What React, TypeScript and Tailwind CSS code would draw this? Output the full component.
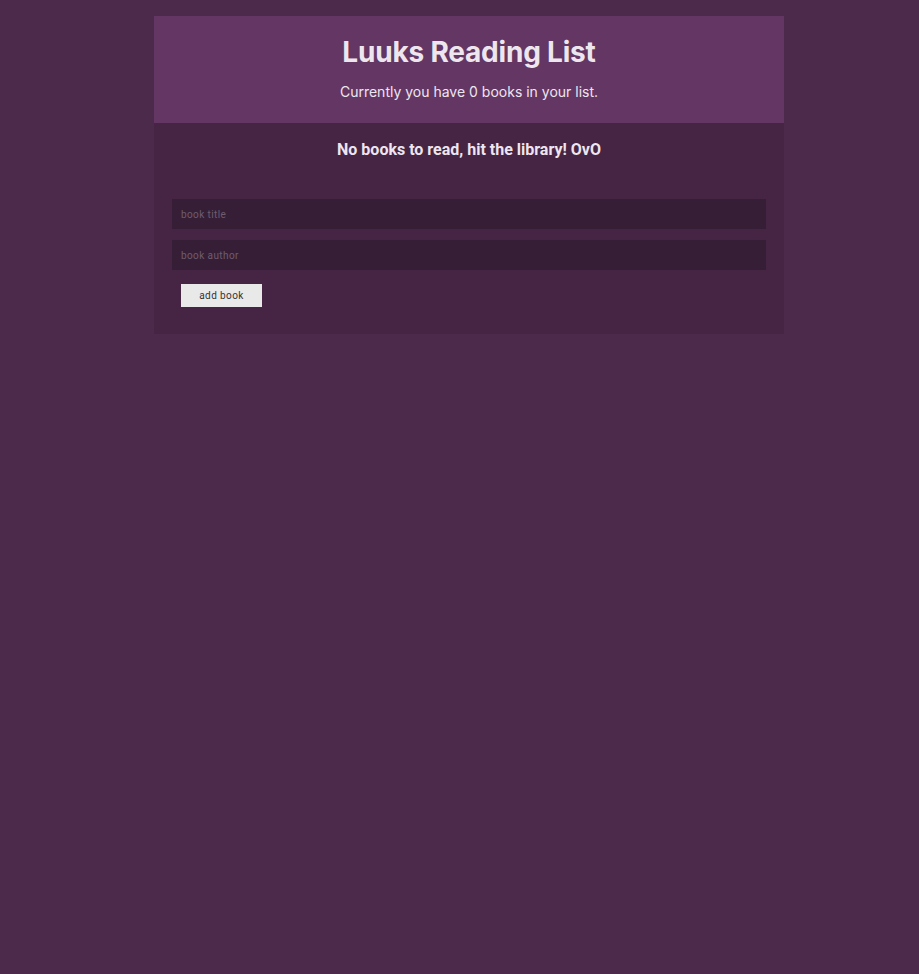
import React from "react";

export default function App() {
  return (
    <div className="min-h-[974px] w-full bg-[#4b2a4b] pt-4 font-[family-name:Inter,sans-serif]">
      <div className="ml-[154px] w-[630px]">
        <header className="flex h-[107px] flex-col items-center bg-[#633663] pt-[19px] text-[#eee6ee]">
          <h1 className="text-[28px] font-bold leading-[34px] tracking-[-0.2px]">Luuks Reading List</h1>
          <p className="mt-[14px] text-[14px] leading-[18px]">Currently you have 0 books in your list.</p>
        </header>
        <main className="flex h-[211px] flex-col bg-[#452444] px-[18px] font-[family-name:Roboto,sans-serif]">
          <p className="mt-[18px] text-center text-[16px] font-bold leading-[18px] text-[#eee6ee]">
            No books to read, hit the library! OvO
          </p>
          <form className="mt-[40px] flex flex-col">
            <input
              placeholder="book title"
              className="h-[30px] w-full bg-[#361f36] px-[9px] text-[10px] tracking-[0.4px] text-[#ddd] placeholder-[#6f5c6f] outline-none"
            />
            <input
              placeholder="book author"
              className="mt-[11px] h-[30px] w-full bg-[#361f36] px-[9px] text-[10px] tracking-[0.4px] text-[#ddd] placeholder-[#6f5c6f] outline-none"
            />
            <button
              type="button"
              className="ml-[9px] mt-[14px] h-[23px] w-[81px] bg-[#e9e9e9] text-[10px] tracking-[0.4px] text-[#333]"
            >
              add book
            </button>
          </form>
        </main>
      </div>
    </div>
  );
}
